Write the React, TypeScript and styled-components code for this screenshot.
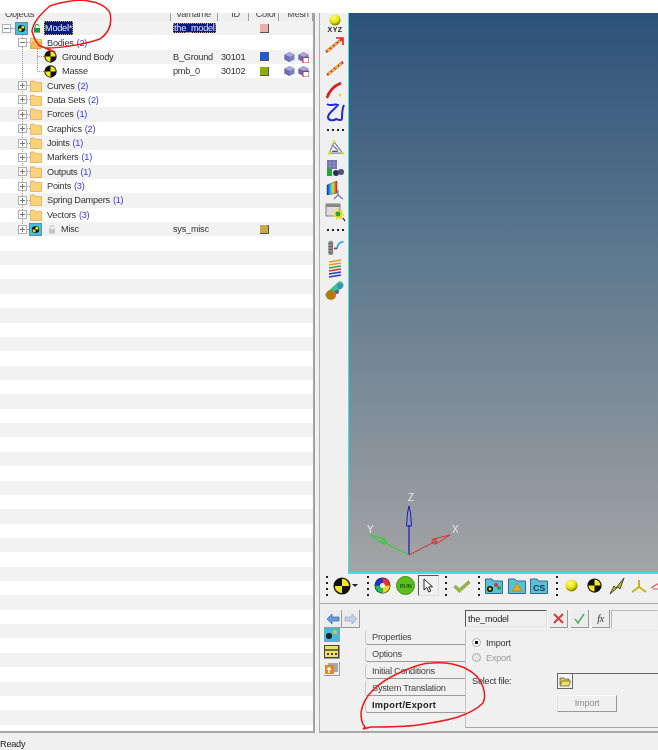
import React from "react";
import styled, { createGlobalStyle } from "styled-components";

const GlobalStyle = createGlobalStyle`
  html, body {
    margin: 0;
    padding: 0;
    background: #f0f0f0;
    overflow: hidden;
  }
`;

const ROW_HEIGHT = 14.36;
const UI_FONT = `"Liberation Sans", Arial, sans-serif`;

const Window = styled.div`
  position: relative;
  width: 658px;
  height: 750px;
  display: flex;
  flex-direction: column;
  overflow: hidden;
  background: #f0f0f0;
  color: #333;
  font-family: ${UI_FONT};
  font-size: 9.2px;
  letter-spacing: -0.25px;
  filter: blur(0.4px);
`;
const TopStrip = styled.div`
  flex: 0 0 13px;
  background: #fff;
`;
const Main = styled.div`
  flex: 0 0 720px;
  min-height: 0;
  display: flex;
`;
const StatusBar = styled.div`
  flex: 1;
  padding-top: 6px;
  line-height: 11px;
  color: #222;
`;

/* object browser */
const Browser = styled.section`
  flex: 0 0 315px;
  display: flex;
  flex-direction: column;
  box-sizing: border-box;
  border-right: 2px solid #a2a2a2;
  border-bottom: 2px solid #a8a8a8;
  background: #fff;
  overflow: hidden;
`;
const columns = "171px 47px 31px 30px 1fr";
const Header = styled.div`
  flex: 0 0 8px;
  display: grid;
  grid-template-columns: ${columns};
  background: #f0f0f0;
  overflow: hidden;
`;
const HeaderCell = styled.div<{ $center?: boolean }>`
  line-height: 3px;
  padding-left: 5px;
  text-align: ${({ $center }) => ($center ? "center" : "left")};
  border-right: 1px solid #a0a0a0;
  color: #444;
`;
const RowList = styled.div`
  position: relative;
  flex: 1;
  min-height: 0;
  overflow: hidden;
`;
const GuideLine = styled.div<{ $left: number; $top: number; $height: number }>`
  position: absolute;
  left: ${({ $left }) => $left}px;
  top: ${({ $top }) => $top}px;
  height: ${({ $height }) => $height}px;
  border-left: 1px dotted #9a9a9a;
`;
const Row = styled.div<{ $striped: boolean }>`
  height: ${ROW_HEIGHT}px;
  display: grid;
  grid-template-columns: ${columns};
  align-items: center;
  background: ${({ $striped }) => ($striped ? "#f2f2f2" : "#fff")};
`;
const NameCell = styled.div<{ $indent: number }>`
  display: flex;
  align-items: center;
  padding-left: ${({ $indent }) => $indent}px;
  white-space: nowrap;
`;
const Expander = styled.span`
  position: relative;
  z-index: 1;
  flex: 0 0 auto;
  box-sizing: border-box;
  width: 9px;
  height: 9px;
  border: 1px solid #b0b0b0;
  background: #fff;
  display: flex;
  align-items: center;
  justify-content: center;

  &::before {
    content: "";
    width: 5px;
    height: 1px;
    background: #777;
  }
`;
const ExpanderPlus = styled(Expander)`
  &::after {
    content: "";
    position: absolute;
    left: 3px;
    top: 1px;
    width: 1px;
    height: 5px;
    background: #777;
  }
`;
const Connector = styled.span<{ $width: number }>`
  flex: 0 0 ${({ $width }) => $width}px;
  border-top: 1px dotted #9a9a9a;
`;
const IconSlot = styled.span<{ $gap?: number }>`
  display: inline-flex;
  flex: 0 0 auto;
  margin-right: ${({ $gap }) => $gap ?? 0}px;
`;
const Count = styled.span`
  margin-left: 3px;
  color: #3a3ae0;
`;
const Selected = styled.span`
  background: #0a1a80;
  color: #e8e8ff;
  outline: 1px dotted #d0a040;
  outline-offset: -1px;
  padding: 0 1px;
  line-height: 14px;
`;
const TextCell = styled.div`
  padding-left: 2px;
  white-space: nowrap;
  overflow: hidden;
`;
const IdCell = styled.div`
  padding-left: 3px;
`;
const Swatch = styled.span<{ $color: string }>`
  display: block;
  width: 8px;
  height: 8px;
  margin-left: 11px;
  background: ${({ $color }) => $color};
  border-right: 1px solid #555;
  border-bottom: 1px solid #555;
`;
const MeshCell = styled.div`
  display: flex;
  gap: 3px;
  padding-left: 5px;
`;

/* right side */
const RightSide = styled.div`
  flex: 1;
  display: flex;
  flex-direction: column;
  padding-left: 4px;
  min-width: 0;
  min-height: 0;
`;
const Sash = styled.div`
  border-left: 1px solid #b0b0b0;
  border-bottom: 2px solid #a8a8a8;
  flex: 1;
  display: flex;
  flex-direction: column;
  min-width: 0;
  min-height: 0;
`;
const Upper = styled.div`
  flex: 0 0 561px;
  display: flex;
`;
const VToolbar = styled.div`
  flex: 0 0 28px;
  box-sizing: border-box;
  display: flex;
  flex-direction: column;
  align-items: center;
  padding-left: 2px;
`;
const VTool = styled.div<{ $height: number }>`
  height: ${({ $height }) => $height}px;
  display: flex;
  flex-direction: column;
  align-items: center;
  justify-content: center;
`;
const XyzLabel = styled.span`
  font-size: 7px;
  font-weight: bold;
  line-height: 7px;
  color: #222;
  letter-spacing: 0.4px;
`;
const DotsH = styled.div`
  width: 17px;
  height: 2px;
  background: repeating-linear-gradient(90deg, #222 0 2px, transparent 2px 5px);
`;
const Viewport = styled.div`
  position: relative;
  flex: 1;
  border-left: 1px solid #35e4e4;
  border-bottom: 2px solid #35e4e4;
  background: linear-gradient(180deg, #2d5279 0%, #5f7a90 45%, #a4a4a4 100%);
`;
const Triad = styled.svg`
  position: absolute;
  left: 10px;
  bottom: 5px;
  overflow: visible;
`;
const HToolbar = styled.div`
  flex: 0 0 30px;
  box-sizing: border-box;
  display: flex;
  align-items: center;
  overflow: hidden;
  border-bottom: 1px solid #a9a9a9;
  padding-bottom: 6px;
`;
const DotsV = styled.div`
  flex: 0 0 auto;
  width: 2px;
  height: 20px;
  margin: 0 5px 0 6px;
  background: repeating-linear-gradient(180deg, #222 0 2px, transparent 2px 6px);
`;
const Caret = styled.span`
  width: 0;
  height: 0;
  margin: 0 3px 0 1px;
  border: 3px solid transparent;
  border-top-color: #222;
  border-bottom: 0;
`;
const ToggledTool = styled.div`
  flex: 0 0 auto;
  width: 21px;
  height: 21px;
  box-sizing: border-box;
  display: flex;
  align-items: center;
  justify-content: center;
  border: 1px solid;
  border-color: #555 #ddd #ddd #555;
  margin-left: 1px;
`;
const HTool = styled.span<{ $gap?: number; $lead?: number }>`
  display: inline-flex;
  flex: 0 0 auto;
  margin-left: ${({ $lead }) => $lead ?? 0}px;
  margin-right: ${({ $gap }) => $gap ?? 3}px;
`;

/* entity panel */
const Panel = styled.div`
  position: relative;
  flex: 1;
  min-height: 0;
  display: grid;
  grid-template-columns: 45px 100px 1fr;
  grid-template-rows: 24px minmax(0, 1fr);
`;
const NavButtons = styled.div`
  display: flex;
  padding: 6px 0 0 4px;
`;
const NavButton = styled.span`
  flex: 0 0 17px;
  display: flex;
  align-items: center;
  justify-content: center;
  height: 17px;
  border-right: 1px solid #999;
  border-bottom: 1px solid #999;
  background: #ececec;
`;
const NameRow = styled.div`
  grid-column: 2 / 4;
  display: flex;
  align-items: flex-start;
  padding: 6px 0 0 100px;
`;
const NameField = styled.div`
  box-sizing: border-box;
  flex: 0 0 82px;
  height: 17px;
  border: 1px solid;
  border-color: #555 #e4e4e4 #e4e4e4 #555;
  padding-left: 2px;
  line-height: 16px;
  color: #222;
`;
const SquareButton = styled.span`
  flex: 0 0 auto;
  display: flex;
  align-items: center;
  justify-content: center;
  width: 17px;
  height: 17px;
  margin-left: 3px;
  border-right: 1px solid #999;
  border-bottom: 1px solid #999;
  background: #ececec;
  font-family: "Liberation Serif", serif;
  font-style: italic;
  font-size: 10px;
`;
const ExprField = styled.div`
  flex: 1;
  height: 17px;
  margin-left: 1px;
  border: 1px solid;
  border-color: #bbb #eee #eee #bbb;
`;
const SideIcons = styled.div`
  display: flex;
  flex-direction: column;
  gap: 3px;
  padding-left: 4px;
`;
const SideIcon = styled.span`
  display: flex;
  width: 15px;
  height: 13px;
  border-right: 1px solid #999;
  border-bottom: 1px solid #999;
`;
const Tabs = styled.div`
  display: flex;
  flex-direction: column;
  padding-top: 2px;
`;
const Tab = styled.div<{ $active?: boolean }>`
  box-sizing: border-box;
  height: 15px;
  margin-bottom: 2px;
  padding-left: 6px;
  line-height: 15px;
  font-weight: ${({ $active }) => ($active ? "bold" : "normal")};
  letter-spacing: ${({ $active }) => ($active ? "0.3px" : "-0.25px")};
  color: ${({ $active }) => ($active ? "#222" : "#444")};
  border-bottom: 1px solid #9a9a9a;
  border-left: 1px solid #ccc;
  border-top-left-radius: 3px;
  border-bottom-left-radius: 3px;
`;
const TabBody = styled.div`
  margin: 2px 0 3px 0;
  padding: 4px 0 0 6px;
  border-left: 1px solid #c4c4c4;
  border-bottom: 1px solid #a8a8a8;
  border-top: 1px solid #e8e8e8;
`;
const RadioRow = styled.div<{ $disabled?: boolean }>`
  height: 15px;
  display: flex;
  align-items: center;
  gap: 5px;
  color: ${({ $disabled }) => ($disabled ? "#a0a0a0" : "#333")};
`;
const Radio = styled.span<{ $on?: boolean }>`
  box-sizing: border-box;
  width: 9px;
  height: 9px;
  border-radius: 50%;
  border: 1px solid #aaa;
  background: ${({ $on }) => ($on ? "radial-gradient(#111 0 1.6px, #fff 2px)" : "#e8e8e8")};
`;
const FileRow = styled.div`
  display: flex;
  align-items: center;
  margin-top: 8px;
  height: 16px;
`;
const FileLabel = styled.span`
  flex: 0 0 85px;
`;
const BrowseButton = styled.span`
  box-sizing: border-box;
  flex: 0 0 16px;
  height: 16px;
  display: flex;
  align-items: center;
  justify-content: center;
  border: 1px solid #666;
  background: #f4f4f4;
`;
const FileField = styled.div`
  flex: 1;
  height: 15px;
  border-top: 1px solid #666;
`;
const ImportButton = styled.div`
  box-sizing: border-box;
  width: 60px;
  height: 17px;
  margin: 6px 0 0 85px;
  border: 1px solid;
  border-color: #f8f8f8 #999 #999 #e4e4e4;
  text-align: center;
  line-height: 15px;
  color: #8c8c8c;
`;
const Scribble = styled.svg`
  position: absolute;
  left: 0;
  top: 0;
  pointer-events: none;
`;

/* drawings */
const Dummy: React.FC<{ size: number }> = ({ size }) => (
  <svg width={size} height={size} viewBox="0 0 20 20">
    <circle cx="10" cy="10" r="9.5" fill="#111" />
    <path d="M10 10V2a8 8 0 0 1 8 8ZM10 10v8a8 8 0 0 1-8-8Z" fill="#f2e81c" />
  </svg>
);
const ModelIcon: React.FC = () => (
  <svg width="13" height="13" viewBox="0 0 13 13">
    <rect x="0.5" y="0.5" width="12" height="12" fill="#45bfe0" stroke="#6a8ca0" />
    <circle cx="6.5" cy="6.5" r="3.6" fill="#111" />
    <path d="M6.5 6.5V3.4a3 3 0 0 1 3 3.1ZM6.5 6.5v3a3 3 0 0 1-3-3Z" fill="#f2e81c" />
  </svg>
);
const Lock: React.FC<{ color: string }> = ({ color }) => (
  <svg width="8" height="9" viewBox="0 0 8 9">
    <path d="M2 4V2.4a2 2 0 0 1 4 0" fill="none" stroke={color} strokeWidth="1" />
    <rect x="1" y="4" width="6" height="4.6" fill={color} />
  </svg>
);
const Folder: React.FC<{ open?: boolean }> = ({ open }) => (
  <svg width="12" height="12" viewBox="0 0 12 12">
    <path d="M0.5 1h4l1 1.4h6v9.100h-11Z" fill="#f9d27a" stroke="#dca648" strokeWidth="0.7" />
    {open && <path d="M2.500 5h9l-1.500 6.500h-9.500Z" fill="#f5b95a" stroke="#d09030" strokeWidth="0.5" />}
  </svg>
);
const Cube: React.FC<{ badge?: boolean }> = ({ badge }) => (
  <svg width="11" height="12" viewBox="0 0 11 12">
    <path d="M5.5 1 10.5 3.5V8.5L5.5 11 .5 8.5V3.5Z" fill="#8080c0" />
    <path d="M5.5 1 10.5 3.5 5.5 6 .5 3.5Z" fill="#a8a8de" />
    <path d="M5.5 6V11L.5 8.5V3.5Z" fill="#6c6cb0" />
    {badge && <rect x="5" y="6.5" width="6" height="5.5" fill="#fff" stroke="#c03030" strokeWidth="1" />}
  </svg>
);
const Sphere: React.FC<{ size: number }> = ({ size }) => (
  <svg width={size} height={size} viewBox="0 0 14 14">
    <defs>
      <radialGradient id="ball" cx="0.4" cy="0.3" r="0.75">
        <stop offset="0" stopColor="#fbfb90" />
        <stop offset="0.55" stopColor="#e6e600" />
        <stop offset="1" stopColor="#6b6b00" />
      </radialGradient>
    </defs>
    <circle cx="7" cy="7" r="6.5" fill="url(#ball)" />
  </svg>
);

const toolSvg = (body: React.ReactNode) => (
  <svg width="22" height="20" viewBox="0 0 22 20">
    {body}
  </svg>
);

const FolderTool: React.FC<{ kind: "entities" | "triangle" | "cs" }> = ({ kind }) => (
  <svg width="18" height="16" viewBox="0 0 18 16" fontFamily={UI_FONT}>
    <path d="M.5 15.500V1H7L8.500 3H17.500V15.500Z" fill="#58c0d8" stroke="#3a6a80" />
    {kind === "entities" && (
      <>
        <circle cx="5" cy="11" r="3" fill="#111" />
        <circle cx="5" cy="11" r="1.400" fill="#e8e020" />
        <circle cx="11" cy="7" r="2" fill="#c04040" />
        <circle cx="14" cy="10" r="2" fill="#30a040" />
      </>
    )}
    {kind === "triangle" && <path d="M9 5 14 13H4Z" fill="#e8a820" stroke="#a87810" strokeWidth="0.6" />}
    {kind === "cs" && (
      <text x="9" y="13" fontSize="9" fontWeight="bold" textAnchor="middle" fill="#16384c">CS</text>
    )}
  </svg>
);

const treeRows = [
  { kind: "model", name: "Model*", varname: "the_model", color: "#e8b0a8" },
  { kind: "open", name: "Bodies", count: 2 },
  { kind: "body", name: "Ground Body", varname: "B_Ground", id: "30101", color: "#2456d8", mesh: true },
  { kind: "body", name: "Masse", varname: "pmb_0", id: "30102", color: "#8cb000", mesh: true },
  { kind: "folder", name: "Curves", count: 2 },
  { kind: "folder", name: "Data Sets", count: 2 },
  { kind: "folder", name: "Forces", count: 1 },
  { kind: "folder", name: "Graphics", count: 2 },
  { kind: "folder", name: "Joints", count: 1 },
  { kind: "folder", name: "Markers", count: 1 },
  { kind: "folder", name: "Outputs", count: 1 },
  { kind: "folder", name: "Points", count: 3 },
  { kind: "folder", name: "Spring Dampers", count: 1 },
  { kind: "folder", name: "Vectors", count: 3 },
  { kind: "misc", name: "Misc", varname: "sys_misc", color: "#c8a848" },
];
const EMPTY_ROWS = 35;

const TreeName: React.FC<{ row: (typeof treeRows)[number] }> = ({ row }) => {
  if (row.kind === "model") {
    return (
      <NameCell $indent={2}>
        <Expander />
        <Connector $width={4} />
        <IconSlot $gap={5}><ModelIcon /></IconSlot>
        <IconSlot $gap={3}><Lock color="#1f9a2a" /></IconSlot>
        <Selected>{row.name}</Selected>
      </NameCell>
    );
  }
  if (row.kind === "body") {
    return (
      <NameCell $indent={37}>
        <Connector $width={7} />
        <IconSlot $gap={5}><Dummy size={13} /></IconSlot>
        {row.name}
      </NameCell>
    );
  }
  if (row.kind === "misc") {
    return (
      <NameCell $indent={18}>
        <ExpanderPlus />
        <Connector $width={2} />
        <IconSlot $gap={6}><ModelIcon /></IconSlot>
        <IconSlot $gap={5}><Lock color="#c4c4c4" /></IconSlot>
        {row.name}
      </NameCell>
    );
  }
  const Box = row.kind === "open" ? Expander : ExpanderPlus;
  return (
    <NameCell $indent={18}>
      <Box />
      <Connector $width={3} />
      <IconSlot $gap={5}><Folder open={row.kind === "open"} /></IconSlot>
      {row.name}
      <Count>({row.count})</Count>
    </NameCell>
  );
};

const App: React.FC = () => (
  <Window>
    <GlobalStyle />
    <TopStrip />
    <Main>
      <Browser>
        <Header>
          <HeaderCell>Objects</HeaderCell>
          <HeaderCell>Varname</HeaderCell>
          <HeaderCell $center>ID</HeaderCell>
          <HeaderCell $center>Color</HeaderCell>
          <HeaderCell $center>Mesh</HeaderCell>
        </Header>
        <RowList>
          <GuideLine $left={22} $top={14} $height={195} />
          <GuideLine $left={37} $top={28} $height={23} />
          {treeRows.map((row, index) => (
            <Row key={row.name} $striped={index % 2 === 0}>
              <TreeName row={row} />
              <TextCell>{row.kind === "model" ? <Selected>{row.varname}</Selected> : row.varname}</TextCell>
              <IdCell>{row.id}</IdCell>
              <div>{row.color && <Swatch $color={row.color} />}</div>
              <MeshCell>
                {row.mesh && (
                  <>
                    <Cube />
                    <Cube badge />
                  </>
                )}
              </MeshCell>
            </Row>
          ))}
          {Array.from({ length: EMPTY_ROWS }, (_, index) => (
            <Row key={index} $striped={(index + treeRows.length) % 2 === 0} />
          ))}
        </RowList>
      </Browser>
      <RightSide>
        <Sash>
          <Upper>
            <VToolbar>
              <VTool $height={21}>
                <Sphere size={12} />
                <XyzLabel>XYZ</XyzLabel>
              </VTool>
              <VTool $height={22}>
                {toolSvg(
                  <>
                    <path d="M2 17 18 4" stroke="#e03030" strokeWidth="2.600" />
                    <path d="M3.500 15.800 16 5.800" stroke="#e6e620" strokeWidth="1.600" strokeDasharray="3 1.500" />
                    <path d="M12 3h7v7" fill="none" stroke="#e02020" strokeWidth="1.600" />
                  </>
                )}
              </VTool>
              <VTool $height={23}>
                {toolSvg(
                  <>
                    <path d="M3 17 19 4" stroke="#e03030" strokeWidth="2.600" />
                    <path d="M4.500 15.800 17.500 5.200" stroke="#e6e620" strokeWidth="1.600" strokeDasharray="3 1.500" />
                  </>
                )}
              </VTool>
              <VTool $height={22}>
                {toolSvg(
                  <>
                    <path d="M3 18C5 11 10 6 17 3" fill="none" stroke="#e01818" strokeWidth="2.600" />
                    <circle cx="16" cy="15" r="1.400" fill="#e0e020" />
                  </>
                )}
              </VTool>
              <VTool $height={21}>
                {toolSvg(
                  <path
                    d="M3 2C7 5 11 1 14 3 10 8 4 11 4 15 4 19 10 19 12 17 17 19 18 18 18 16 18 12 18 7 20 3"
                    fill="none"
                    stroke="#1c2cd8"
                    strokeWidth="2"
                  />
                )}
              </VTool>
              <VTool $height={16}><DotsH /></VTool>
              <VTool $height={19}>
                {toolSvg(
                  <>
                    <path d="M5 16 10 4 19 16Z" fill="none" stroke="#7f86b0" strokeWidth="1.300" />
                    <circle cx="5" cy="16" r="1.600" fill="#e0e020" />
                    <circle cx="10" cy="4" r="1.600" fill="#e0e020" />
                    <circle cx="19" cy="16" r="1.600" fill="#e0e020" />
                    <path d="M9 8 14 13M8 14h6" stroke="#222" strokeWidth="1" />
                  </>
                )}
              </VTool>
              <VTool $height={22}>
                {toolSvg(
                  <>
                    <rect x="3" y="2" width="10" height="9" fill="#6a70a8" />
                    <path d="M3 5h10M3 8h10M6 2v9M10 2v9" stroke="#a4a8d0" strokeWidth="0.600" />
                    <rect x="3" y="11" width="5" height="7" fill="#24a834" />
                    <circle cx="12" cy="15" r="3" fill="#30305a" />
                    <circle cx="17" cy="14" r="3" fill="#50507a" />
                  </>
                )}
              </VTool>
              <VTool $height={22}>
                {toolSvg(
                  <>
                    <defs>
                      <linearGradient id="contour" x1="0" x2="1" y1="0" y2="0">
                        <stop offset="0" stopColor="#1818e0" />
                        <stop offset="0.35" stopColor="#20c0e0" />
                        <stop offset="0.6" stopColor="#e8e020" />
                        <stop offset="1" stopColor="#e01818" />
                      </linearGradient>
                    </defs>
                    <path d="M3 5 13 1V13L3 15Z" fill="url(#contour)" stroke="#555" strokeWidth="0.600" />
                    <path d="M14 10v5L10 19M14 15l5 4" fill="none" stroke="#7a80b0" strokeWidth="1.400" />
                  </>
                )}
              </VTool>
              <VTool $height={21}>
                {toolSvg(
                  <>
                    <rect x="2" y="2" width="14" height="12" fill="#ddd" stroke="#666" strokeWidth="0.800" />
                    <rect x="2" y="2" width="14" height="3" fill="#888" />
                    <path d="M14 6 16 9 19 8 18 11 21 13 18 14 18 18 15 16 12 18 12 15 8 14 11 12 9 9 12 10Z" fill="#e8e020" />
                    <circle cx="14" cy="12" r="2.400" fill="#28a040" />
                    <path d="M19 16 21 19" stroke="#111" strokeWidth="1.200" />
                  </>
                )}
              </VTool>
              <VTool $height={16}><DotsH /></VTool>
              <VTool $height={19}>
                {toolSvg(
                  <>
                    <rect x="4" y="3" width="5" height="15" rx="2" fill="#8a8a8a" />
                    <path d="M4 6h5M4 9h5M4 12h5M4 15h5" stroke="#555" strokeWidth="0.700" />
                    <path d="M10 11h3c1-5 3-7 7-7" fill="none" stroke="#20a0e0" strokeWidth="1.600" />
                    <path d="M10 11h3" stroke="#e02020" strokeWidth="1.600" />
                  </>
                )}
              </VTool>
              <VTool $height={22}>
                {toolSvg(
                  <>
                    <path d="M5 4 17 2M5 7 17 5" stroke="#e0a020" strokeWidth="1.600" />
                    <path d="M5 10 17 8" stroke="#30a840" strokeWidth="1.600" />
                    <path d="M5 13 17 11" stroke="#e03030" strokeWidth="1.600" />
                    <path d="M5 16 17 14M5 19 17 17" stroke="#2040d0" strokeWidth="1.600" />
                  </>
                )}
              </VTool>
              <VTool $height={23}>
                {toolSvg(
                  <>
                    <path d="M5 14 16 4" stroke="#30c890" strokeWidth="7" strokeLinecap="round" />
                    <circle cx="7" cy="14" r="5" fill="#b87810" />
                    <circle cx="16" cy="5" r="3" fill="#4090c0" />
                    <circle cx="13" cy="11" r="2" fill="#6a50b0" />
                  </>
                )}
              </VTool>
            </VToolbar>
            <Viewport>
              <Triad width="100" height="70" viewBox="0 0 100 70">
                <g transform="translate(50 58)">
                  <path d="M0 0V-30" stroke="#1818c8" strokeWidth="1.200" />
                  <path d="M-2.500-29-1.500-42 0-49 1.500-42 2.500-29Z" fill="none" stroke="#1818c8" strokeWidth="1" />
                  <path d="M0 0 27-14" stroke="#d83030" strokeWidth="1" />
                  <path d="M24-16 41-20 27-11Z" fill="none" stroke="#d83030" strokeWidth="1" />
                  <circle cx="25.500" cy="-13.500" r="2.500" fill="none" stroke="#d83030" />
                  <path d="M0 0-26-13" stroke="#20d820" strokeWidth="1" />
                  <path d="M-24-16-39-20-26-11Z" fill="none" stroke="#20d820" strokeWidth="1" />
                  <circle cx="-25" cy="-13.500" r="2.500" fill="none" stroke="#20d820" />
                  <text x="-1" y="-54" fontSize="10" fill="#e8e8e8" fontFamily={UI_FONT}>Z</text>
                  <text x="43" y="-22" fontSize="10" fill="#e8e8e8" fontFamily={UI_FONT}>X</text>
                  <text x="-42" y="-22" fontSize="10" fill="#e8e8e8" fontFamily={UI_FONT}>Y</text>
                </g>
              </Triad>
            </Viewport>
          </Upper>
          <HToolbar>
            <DotsV />
            <HTool $gap={0}><Dummy size={18} /></HTool>
            <Caret />
            <DotsV />
            <HTool $gap={5}>
              <svg width="17" height="17" viewBox="0 0 17 17">
                <circle cx="8.500" cy="8.500" r="8" fill="#222" />
                <path d="M8.500 8.500V1A7.500 7.500 0 0 1 16 8.500Z" fill="#e83030" />
                <path d="M8.500 8.500H16A7.500 7.500 0 0 1 8.500 16Z" fill="#e8d820" />
                <path d="M8.500 8.500V16A7.500 7.500 0 0 1 1 8.500Z" fill="#20c050" />
                <path d="M8.500 8.500H1A7.500 7.500 0 0 1 8.500 1Z" fill="#2030d8" />
                <circle cx="8.500" cy="8.500" r="2.500" fill="#eee" />
              </svg>
            </HTool>
            <HTool $gap={2}>
              <svg width="19" height="19" viewBox="0 0 19 19">
                <circle cx="9.500" cy="9.500" r="9" fill="#5cc01c" stroke="#3c8c10" />
                <text x="9.500" y="11.800" fontSize="6" fontWeight="bold" textAnchor="middle" fill="#1c5c08" fontFamily={UI_FONT}>RUN</text>
              </svg>
            </HTool>
            <ToggledTool>
              <svg width="11" height="15" viewBox="0 0 11 15">
                <path d="M1 1V12L3.800 9.500 5.800 14 7.800 13 5.800 8.800H9.500Z" fill="#fff" stroke="#222" strokeWidth="1" />
              </svg>
            </ToggledTool>
            <DotsV />
            <HTool $gap={0}>
              <svg width="20" height="14" viewBox="0 0 20 14">
                <path d="M2.500 7 7.500 11.500 17.500 2.500" fill="none" stroke="#9ab04a" strokeWidth="3.600" />
              </svg>
            </HTool>
            <DotsV />
            <HTool $gap={5}><FolderTool kind="entities" /></HTool>
            <HTool $gap={4}><FolderTool kind="triangle" /></HTool>
            <HTool $gap={2}><FolderTool kind="cs" /></HTool>
            <DotsV />
            <HTool $lead={2} $gap={9}><Sphere size={13} /></HTool>
            <HTool $gap={7}><Dummy size={15} /></HTool>
            <HTool $gap={6}>
              <svg width="16" height="18" viewBox="0 0 16 18">
                <path d="M1 17 5 9 7 11 15 1 11 12 9 10Z" fill="#c8bc10" stroke="#333" strokeWidth="0.900" />
              </svg>
            </HTool>
            <HTool $gap={4}>
              <svg width="16" height="16" viewBox="0 0 16 16">
                <path d="M8 2V9L1 14M8 9 15 14" fill="none" stroke="#c8b410" strokeWidth="2" />
              </svg>
            </HTool>
            <HTool>
              <svg width="10" height="8" viewBox="0 0 10 8">
                <path d="M0 6 8 1M2 7h8" stroke="#e05050" strokeWidth="1.200" />
              </svg>
            </HTool>
          </HToolbar>
          <Panel>
            <NavButtons>
              <NavButton>
                <svg width="14" height="12" viewBox="0 0 14 12">
                  <path d="M1 6 6 1V4H13V8H6V11Z" fill="#6a9ae0" stroke="#3a6aa8" strokeWidth="0.700" />
                </svg>
              </NavButton>
              <NavButton>
                <svg width="14" height="12" viewBox="0 0 14 12">
                  <path d="M13 6 8 1V4H1V8H8V11Z" fill="#c4d0ea" stroke="#9aa8c4" strokeWidth="0.700" />
                </svg>
              </NavButton>
            </NavButtons>
            <NameRow>
              <NameField>the_model</NameField>
              <SquareButton>
                <svg width="11" height="11" viewBox="0 0 11 11">
                  <path d="M1 1 10 10M10 1 1 10" stroke="#c84040" strokeWidth="2" />
                </svg>
              </SquareButton>
              <SquareButton>
                <svg width="11" height="11" viewBox="0 0 11 11">
                  <path d="M1 6 4 10 10 1" fill="none" stroke="#58b058" strokeWidth="1.600" />
                </svg>
              </SquareButton>
              <SquareButton>fx</SquareButton>
              <ExprField />
            </NameRow>
            <SideIcons>
              <SideIcon>
                <svg width="15" height="13" viewBox="0 0 15 13">
                  <rect width="15" height="13" fill="#48b8d8" />
                  <circle cx="5" cy="8" r="3" fill="#222" />
                  <circle cx="11" cy="4" r="2" fill="#d8d020" />
                </svg>
              </SideIcon>
              <SideIcon>
                <svg width="15" height="13" viewBox="0 0 15 13">
                  <rect x="0.500" y="0.500" width="14" height="12" fill="#f0e060" stroke="#444" />
                  <path d="M1 5h13" stroke="#444" strokeWidth="1.500" />
                  <path d="M3 9h2M7 9h2M11 9h2" stroke="#444" strokeWidth="2" />
                </svg>
              </SideIcon>
              <SideIcon>
                <svg width="15" height="13" viewBox="0 0 15 13">
                  <rect x="4" y="1" width="10" height="9" fill="#a8a8a8" />
                  <rect x="1" y="3" width="9" height="9" fill="#e08830" />
                  <path d="M5 5v6M3 7h4" stroke="#fff" strokeWidth="1.400" />
                </svg>
              </SideIcon>
            </SideIcons>
            <Tabs>
              <Tab>Properties</Tab>
              <Tab>Options</Tab>
              <Tab>Initial Conditions</Tab>
              <Tab>System Translation</Tab>
              <Tab $active>Import/Export</Tab>
            </Tabs>
            <TabBody>
              <RadioRow><Radio $on />Import</RadioRow>
              <RadioRow $disabled><Radio />Export</RadioRow>
              <FileRow>
                <FileLabel>Select file:</FileLabel>
                <BrowseButton>
                  <svg width="12" height="12" viewBox="0 0 12 12">
                    <path d="M1 3h4l1 1h4v6H1Z" fill="#e0c840" stroke="#555" strokeWidth="0.700" />
                    <path d="M3 6h8.500L10 11H1Z" fill="#f4e060" stroke="#555" strokeWidth="0.700" />
                  </svg>
                </BrowseButton>
                <FileField />
              </FileRow>
              <ImportButton>Import</ImportButton>
            </TabBody>
          </Panel>
        </Sash>
      </RightSide>
    </Main>
    <StatusBar>Ready</StatusBar>
    <Scribble width="658" height="750" viewBox="0 0 658 750">
      <path
        d="M80 0C94 1 106 5 110 13 112 22 110 32 100 39 86 44 62 48 47 48 39 48 35 42 32 31 33 23 38 16 50 6 60 2 70 1 80 0ZM38 45 55 52"
        fill="none"
        stroke="#f01818"
        strokeWidth="1.500"
      />
      <path
        d="M363 729 365 727C364 726 361 722 361 713 362 704 367 696 373 690 382 681 392 676 401 672 412 667 422 663 431 663 445 662 456 664 465 668 475 673 481 680 483 687 485 693 485 699 483 703 476 710 467 714 458 717 445 721 432 723 418 725 403 727 386 727 371 727L363 729"
        fill="none"
        stroke="#f01818"
        strokeWidth="1.500"
      />
    </Scribble>
  </Window>
);

export default App;
